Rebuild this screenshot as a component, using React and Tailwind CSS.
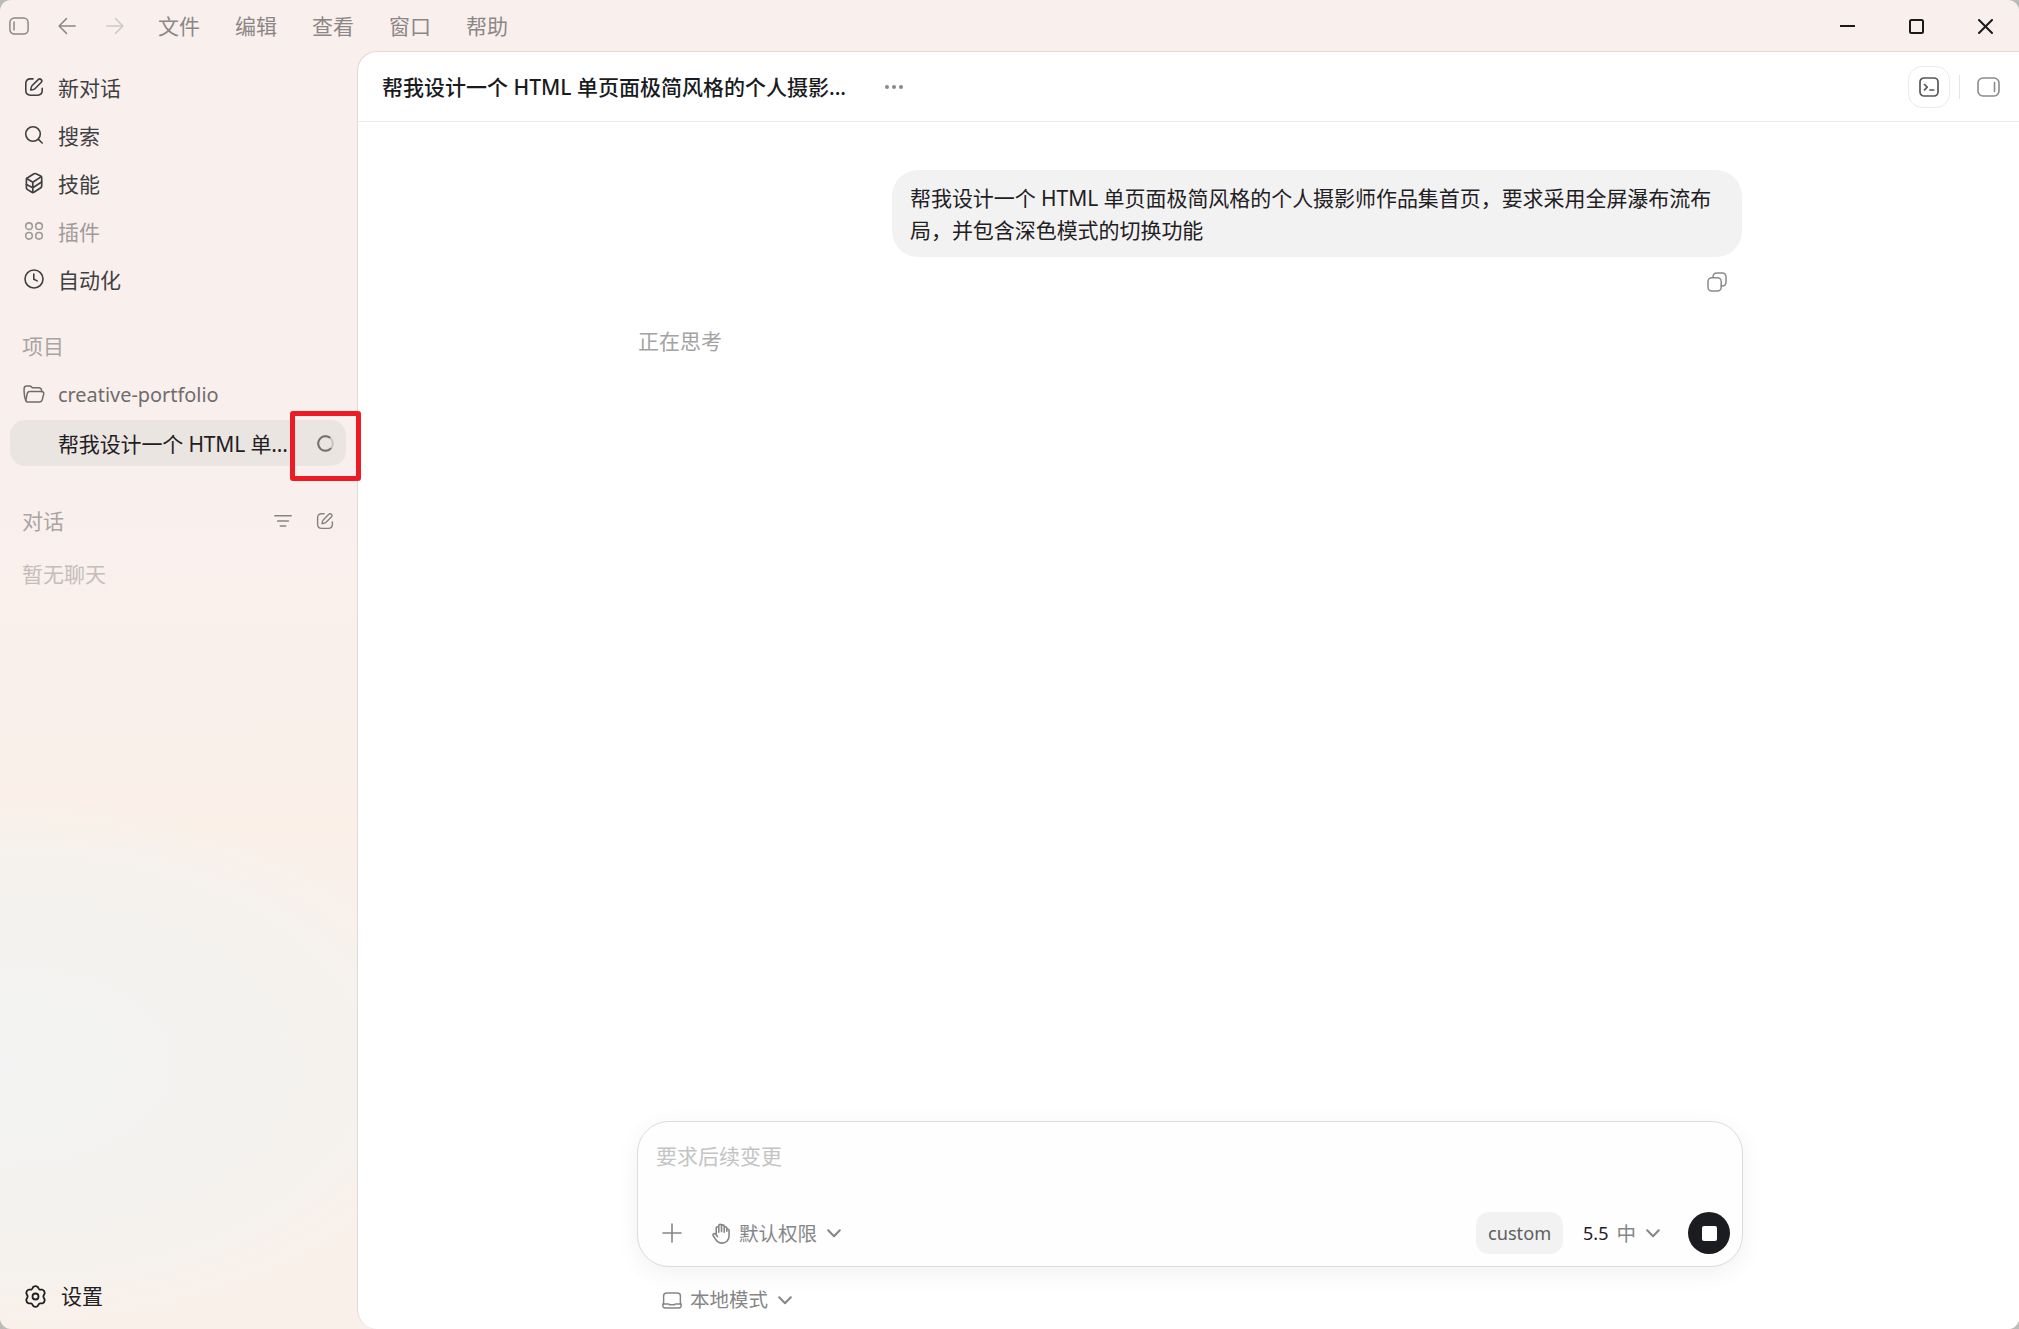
import React from "react";

const Icon = ({ w = 20, h = 20, box, sw = 1.5, className = "", children }) => (
  <svg
    width={w}
    height={h}
    viewBox={box || `0 0 ${w} ${h}`}
    fill="none"
    stroke="currentColor"
    strokeWidth={sw}
    strokeLinecap="round"
    strokeLinejoin="round"
    className={`shrink-0 ${className}`}
  >
    {children}
  </svg>
);

const EditIcon = ({ size = 20, className }) => (
  <Icon w={size} h={size} box="0 0 20 20" sw={1.6} className={className}>
    <path d="M9 1.9H6.4C3.4 1.9 1.8 3.5 1.8 6.5v7.1c0 3 1.6 4.6 4.6 4.6h7.2c3 0 4.6-1.6 4.6-4.6v-2.4" />
    <path d="M14.2 2.6 8 8.8c-.6.6-1 2.2-1.3 4.2 1.8-.2 3.5-.6 4.2-1.3l6.2-6.2c.9-.9.9-2.1.1-2.9s-2.1-.8-3 0Z" />
  </Icon>
);

const SearchIcon = () => (
  <Icon sw={1.6}>
    <circle cx="9" cy="9" r="7.3" />
    <path d="m14.4 14.4 3.8 3.6" />
  </Icon>
);

const SkillIcon = () => (
  <Icon h={22} sw={1.7}>
    <path d="M3.200 5.900 10 1.800c.7-.4 1.300-.4 2-.1l4.700 2.200c.7.4 1 .9 1 1.600v8.500c0 .7-.3 1.300-.9 1.700l-6.900 4.600c-.7.400-1.300.400-2 0l-4.400-2.700c-.8-.5-1.100-1-1.100-1.800V7.200c0-.6.200-1 .8-1.300Z" />
    <path d="m2.700 6.500 6.100 3.700 8.500-5.600M8.800 10.200v10.100M2.500 12.600l6.300 3.100 8.800-5.700" />
  </Icon>
);

const PluginIcon = () => (
  <Icon sw={1.6}>
    <circle cx="5" cy="5.200" r="3.300" />
    <circle cx="15" cy="5.200" r="3.300" />
    <circle cx="5" cy="14.800" r="3.300" />
    <circle cx="15" cy="14.800" r="3.300" />
  </Icon>
);

const ClockIcon = () => (
  <Icon sw={1.6}>
    <circle cx="10" cy="10" r="9" />
    <path d="M9.800 5v5.200l3.400 1.700" />
  </Icon>
);

const FolderIcon = () => (
  <Icon w={22} h={18} sw={1.5}>
    <path d="M3 15.800C1.500 12.800 1 7.500 1.100 3.600 1.200 1.800 2 1 3.700 1h2.800c1 0 1.500.3 2.100 1l.6.7h6.400c2 0 3 .9 3.100 3.100v.7" />
    <path d="M6.600 6.500h11.900c1.800 0 2.600.9 2.200 2.600l-1.400 5.400c-.5 1.700-1.400 2.400-3 2.400H4.600c-1.500 0-2-.8-1.600-2.300l1.200-5.900c.3-1.500 1-2.200 2.400-2.200Z" />
  </Icon>
);

const Chevron = () => (
  <Icon w={14} h={9} sw={2}>
    <path d="m1.200 1.300 5.800 6 5.800-6" />
  </Icon>
);

const menus = ["文件", "编辑", "查看", "窗口", "帮助"];

const navItems = [
  { label: "新对话", icon: <EditIcon />, color: "text-[#3f4042]" },
  { label: "搜索", icon: <SearchIcon />, color: "text-[#3f4042]" },
  { label: "技能", icon: <SkillIcon />, color: "text-[#3f4042]" },
  { label: "插件", icon: <PluginIcon />, color: "text-[#a09b9a]" },
  { label: "自动化", icon: <ClockIcon />, color: "text-[#3f4042]" },
];

const TitleBar = () => (
  <div className="flex h-[51px] shrink-0 items-center justify-between">
    <div className="flex items-center pl-[9px] text-[#8c8786]">
      <Icon h={18}>
        <rect x="0.900" y="0.900" width="18.200" height="16.200" rx="4.500" />
        <path d="M5 5v8" />
      </Icon>
      <Icon w={18} h={18} className="ml-[29px]">
        <path d="M17.200 9H1.200M8.500 1.600 1.100 9l7.400 7.400" />
      </Icon>
      <Icon w={18} h={18} className="ml-[30px] text-[#cfc8c7]">
        <path d="M.8 9h16M9.500 1.600 16.900 9l-7.400 7.400" />
      </Icon>
      <div className="ml-[34px] flex gap-[35px]">
        {menus.map((m) => (
          <span key={m}>{m}</span>
        ))}
      </div>
    </div>
    <div className="flex items-center gap-[54px] pt-px pr-[26px] text-[#1a1a1a]">
      <Icon w={15} h={15} sw={2}>
        <path d="M0 7h15" strokeLinecap="butt" />
      </Icon>
      <Icon w={15} h={15} sw={2}>
        <rect x="1" y="1" width="13" height="13" rx="1.500" />
      </Icon>
      <Icon w={15} h={15} sw={2}>
        <path d="m1 1 13 13M14 1 1 14" />
      </Icon>
    </div>
  </div>
);

const Sidebar = () => (
  <aside className="relative flex w-[357px] shrink-0 flex-col">
    <nav className="flex flex-col pt-3">
      {navItems.map((item) => (
        <div
          key={item.label}
          className={`flex h-12 items-center gap-[14px] pl-6 ${item.color}`}
        >
          {item.icon}
          <span className="pt-px">{item.label}</span>
        </div>
      ))}
    </nav>

    <div className="mt-[18px] flex h-12 items-center pt-px pl-[22px] text-[#aaa4a2]">
      项目
    </div>
    <div className="flex h-[50px] items-center gap-[13px] pl-[23px] text-[#6f6c6b]">
      <FolderIcon />
      <span className="pt-0.5 text-[19.900px]">creative-portfolio</span>
    </div>
    <div className="mt-px ml-[10px] flex h-[46px] w-[336px] items-center justify-between rounded-[15px] bg-[#ebe5e1] pr-3 pl-12 text-[#1f2023]">
      <span className="pt-px tracking-[-0.150px]">
        帮我设计一个 HTML 单...
      </span>
      <Icon w={17} h={17} sw={2} className="text-[#777270]">
        <circle cx="8.500" cy="8.500" r="7.300" className="opacity-30" />
        <path d="M12.500 2.400A7.300 7.300 0 1 0 13.500 13.800" />
      </Icon>
    </div>

    <div className="mt-[31px] flex h-12 items-center pr-[23px] pl-[22px] text-[#aaa4a2]">
      <span className="flex-1">对话</span>
      <Icon w={18} h={14} className="mr-6 text-[#888382]">
        <path d="M.8 1.700h16.400M3.600 7h10.800M6.300 12h5.400" />
      </Icon>
      <EditIcon size={18} className="text-[#888382]" />
    </div>
    <div className="mt-[5px] flex h-12 items-center pl-[22px] text-[#c4bdba]">
      暂无聊天
    </div>

    <div className="mt-auto mb-[9px] flex h-12 items-center gap-[15px] pl-[25px] text-[#1f2023]">
      <Icon w={21} h={23} sw={1.800}>
        <path d="M8.500 1.800c1.300-.8 2.700-.8 4 0 .9.600.9 2.100 1.900 2.600 1 .6 2.200-.2 3.300.3 1.200.6 1.900 1.800 2 3.200.1 1.200-1.300 1.900-1.300 3.600s1.400 2.400 1.300 3.600c-.1 1.400-.8 2.600-2 3.200-1.100.5-2.300-.3-3.300.3-1 .5-1 2-1.900 2.600-1.300.8-2.700.8-4 0-.9-.6-.9-2.100-1.900-2.600-1-.6-2.200.2-3.300-.3-1.200-.6-1.900-1.800-2-3.200-.1-1.200 1.300-1.900 1.300-3.600S1.200 9.100 1.300 7.900c.1-1.400.8-2.600 2-3.200 1.100-.5 2.300.3 3.300-.3 1-.5 1-2 1.900-2.600Z" />
        <circle cx="10.500" cy="11.500" r="3" />
      </Icon>
      <span>设置</span>
    </div>

    {/* highlight around the running indicator */}
    <div className="absolute top-[360px] left-[290px] z-10 h-[70px] w-[71px] rounded-[3px] border-[5px] border-[#ed1c24]" />
  </aside>
);

const Header = () => (
  <header className="flex h-[70px] shrink-0 items-center border-b border-[#ececec] pr-[19px] pl-6">
    <h1 className="font-medium text-[#1a1b1e]">
      帮我设计一个 HTML 单页面极简风格的个人摄影...
    </h1>
    <svg width="20" height="6" fill="#8a8a8a" className="ml-[38px]">
      <circle cx="3" cy="3" r="2" />
      <circle cx="10" cy="3" r="2" />
      <circle cx="17" cy="3" r="2" />
    </svg>
    <div className="ml-auto flex items-center">
      <button className="flex size-[42px] items-center justify-center rounded-[14px] border border-[#ebebeb] text-[#55575a]">
        <Icon sw={1.700}>
          <rect x="1" y="1" width="18" height="18" rx="4" />
          <path d="m5.500 7.500 2.700 2.700-2.700 2.600M10.900 13h3.800" />
        </Icon>
      </button>
      <div className="mx-[9px] h-6 w-px bg-[#e4e4e4]" />
      <Icon w={23} h={20} sw={1.600} className="ml-2 text-[#8a8b8c]">
        <rect x="1" y="1" width="21" height="18" rx="5" />
        <path d="M17.500 5.500v9" />
      </Icon>
    </div>
  </header>
);

const Composer = () => (
  <div className="flex h-[146px] flex-col justify-between rounded-[32px] border border-[#dcdcdc] bg-[#fefefe] pt-[18px] pr-3 pb-3 pl-[18px] shadow-[0_6px_24px_rgba(0,0,0,0.06)]">
    <div className="leading-8 text-[#c4c4c4]">要求后续变更</div>
    <div className="flex h-[42px] items-center text-[19.500px] text-[#858687]">
      <Icon w={20} h={20} sw={1.600} className="ml-1.5">
        <path d="M10 1v18M1 10h18" />
      </Icon>
      <Icon w={18} h={21} sw={1.600} className="mr-[9px] ml-[30px]">
        <path d="M4.200 11V5c0-1.700 2.600-1.700 2.600 0v4.300M6.800 8.800V2.600c0-1.700 2.700-1.700 2.700 0v6M9.500 3.200c0-1.800 2.700-1.800 2.700 0v6M12.200 5c0-1.600 2.600-1.600 2.600 0v3.300M14.800 7.300c0-1.400 2.300-1.400 2.300 0v5.200c0 4.500-2.900 7.600-7 7.600-3.300 0-5.100-1.400-6.600-4L1.200 12.700c-.8-1.500 1-2.900 2.200-1.600l2.100 2.500" />
      </Icon>
      <span className="mr-[10px] pt-px">默认权限</span>
      <Chevron />
      <span className="mr-5 ml-auto flex h-[42px] w-[87px] items-center justify-center rounded-[13px] bg-[#f2f2f2] text-[18.200px] text-[#5f6062]">
        custom
      </span>
      <span className="mr-2 text-[18px] text-[#1f2023]">5.5</span>
      <span className="mr-[10px] pt-px">中</span>
      <Chevron />
      <button className="ml-7 flex size-[42px] items-center justify-center rounded-full bg-[#1b1c1f]">
        <span className="size-[15px] rounded-[2px] bg-white" />
      </button>
    </div>
  </div>
);

export default function App() {
  return (
    <div className="h-[1329px] w-full bg-[#b9bcb9] font-['Noto_Sans','Noto_Sans_CJK_SC',sans-serif] text-[21px] leading-8">
      <div className="flex h-full flex-col overflow-hidden rounded-[11px] bg-[#f9f0ee] bg-[radial-gradient(ellipse_460px_265px_at_0px_1065px,#f2f3f2_0%,#f4f2ef_55%,#f5f2ed_78%,rgba(249,240,235,0)_100%),linear-gradient(180deg,#f9f0ee_0px,#f9f0ee_480px,#faf0eb_640px,#faf0ea_770px,#faf0e8_830px,#f9f0eb_900px,#faf0ea_100%)]">
        <TitleBar />
        <div className="flex min-h-0 flex-1">
          <Sidebar />
          <main className="flex min-w-0 flex-1 flex-col rounded-l-[20px] border-t border-l border-[#e0d9d8] bg-white">
            <Header />
            <div className="flex min-h-0 flex-1 flex-col pt-12 pr-[276px] pl-[279px]">
              <div className="mr-px w-[850px] self-end rounded-[26px] bg-[#f2f2f2] px-[18px] pt-3 pb-[11px] tracking-[-0.050px] text-[#1f2023]">
                帮我设计一个 HTML
                单页面极简风格的个人摄影师作品集首页，要求采用全屏瀑布流布局，并包含深色模式的切换功能
              </div>
              <Icon className="mt-[15px] mr-4 self-end text-[#8a8b8c]">
                <path d="M6 5.500V5c0-2.600 1.300-4 4-4h5c2.600 0 4 1.400 4 4v5c0 2.700-1.400 4-4 4h-.8" />
                <rect x="1" y="5.700" width="13.200" height="13.300" rx="3.800" />
              </Icon>
              <div className="mt-[33px] pl-px text-[#a3a3a3]">正在思考</div>
              <div className="mt-auto">
                <Composer />
                <div className="flex h-[62px] items-center pt-1 pl-[25px] text-[19.500px] text-[#858687]">
                  <Icon h={17} className="mr-2">
                    <path d="M1.600 12V4c0-2.100.9-3 3-3h10.800c2.100 0 3 .9 3 3v8" />
                    <path d="M.8 12h5.700c.6 0 .8.800 1.500.8h4c.7 0 .9-.8 1.500-.8h5.700c.1 2.700-.6 4-2.500 4H3.300C1.400 16 .7 14.700.8 12Z" />
                  </Icon>
                  <span className="mr-[10px]">本地模式</span>
                  <Chevron />
                </div>
              </div>
            </div>
          </main>
        </div>
      </div>
    </div>
  );
}
